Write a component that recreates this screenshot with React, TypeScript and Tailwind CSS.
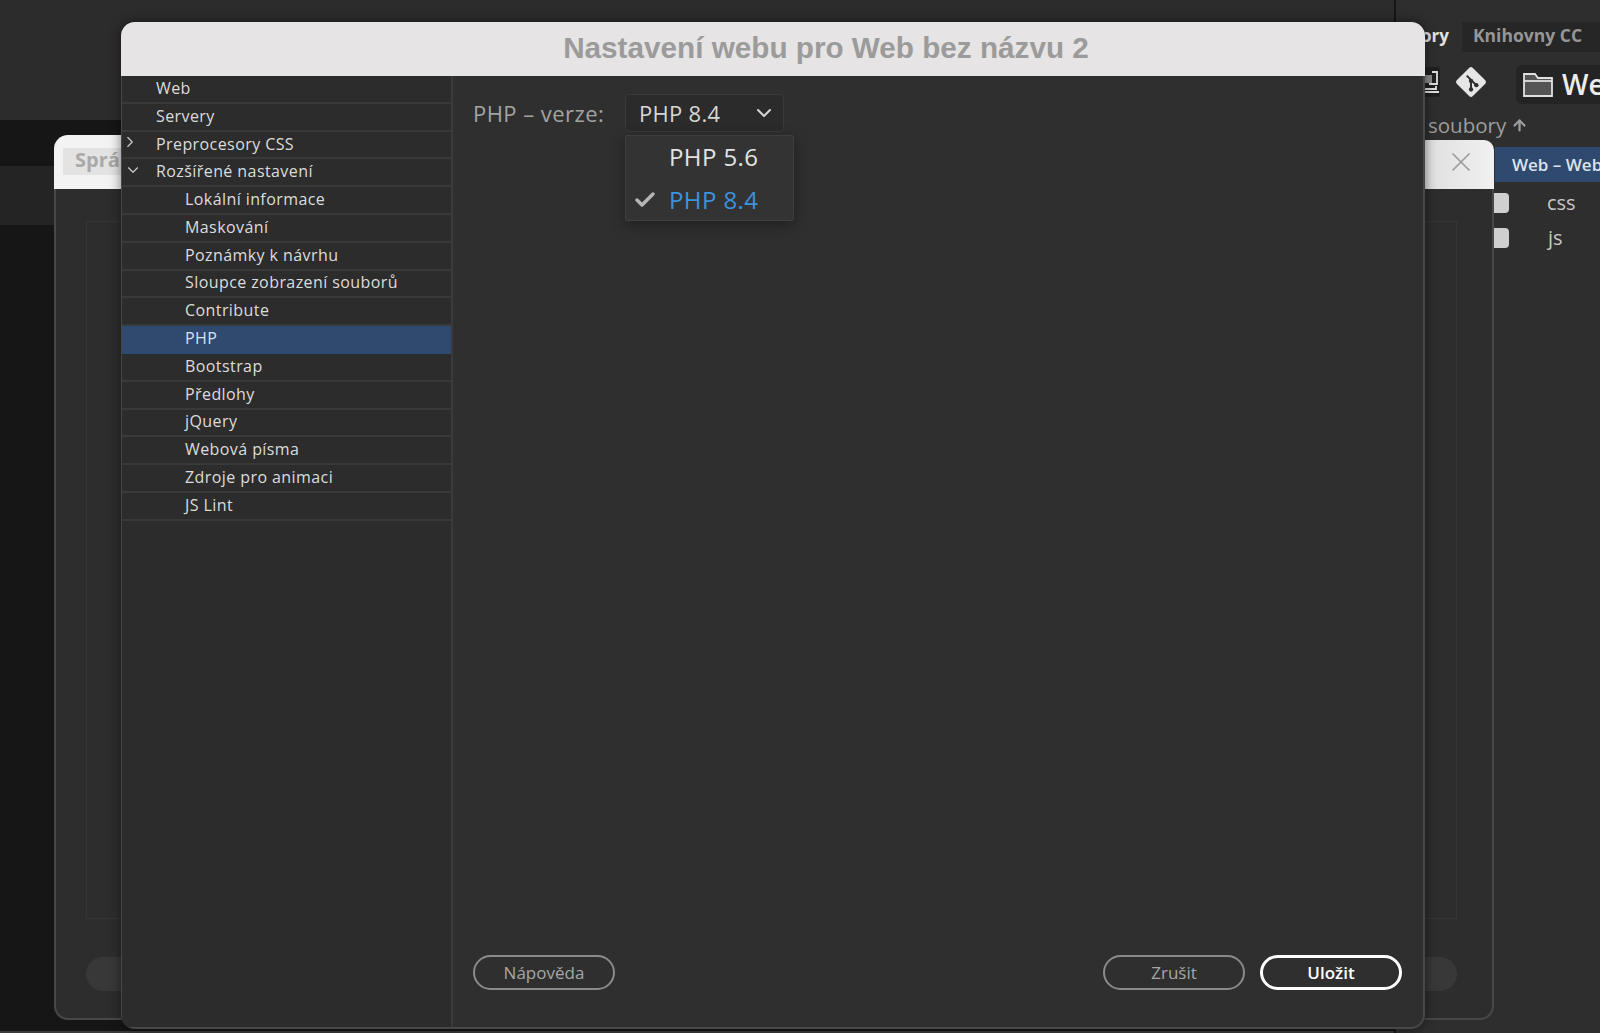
import { ArrowUp, Check, ChevronDown, ChevronRight, X } from "lucide-react";

const rows = [
  { label: "Web", indent: "pl-[34px]" },
  { label: "Servery", indent: "pl-[34px]" },
  { label: "Preprocesory CSS", indent: "pl-[34px]", arrow: "right" },
  { label: "Rozšířené nastavení", indent: "pl-[34px]", arrow: "down" },
  { label: "Lokální informace", indent: "pl-[63px]" },
  { label: "Maskování", indent: "pl-[63px]" },
  { label: "Poznámky k návrhu", indent: "pl-[63px]" },
  { label: "Sloupce zobrazení souborů", indent: "pl-[63px]" },
  { label: "Contribute", indent: "pl-[63px]" },
  { label: "PHP", indent: "pl-[63px]", active: true },
  { label: "Bootstrap", indent: "pl-[63px]" },
  { label: "Předlohy", indent: "pl-[63px]" },
  { label: "jQuery", indent: "pl-[63px]" },
  { label: "Webová písma", indent: "pl-[63px]" },
  { label: "Zdroje pro animaci", indent: "pl-[63px]" },
  { label: "JS Lint", indent: "pl-[63px]" },
];

function BackDialog() {
  return (
    <div className="absolute left-[54px] top-[135px] flex h-[885px] w-[1440px] flex-col">
      <div className="flex h-[54px] shrink-0 justify-between">
        <div className="w-[80px] rounded-tl-[14px] bg-[#f3f3f3] pl-[9px] pt-[13px]">
          <div className="h-[27px] w-[70px] bg-[#e3e3e3] pl-[12px] text-[20px] font-bold leading-[24px] text-[#a9a9a9]">
            Sprá
          </div>
        </div>
        <div className="mt-[5px] flex w-[80px] items-start justify-end rounded-tr-[10px] bg-gradient-to-r from-[#dcdcdc] to-[#f1f1f1] pr-[17px] pt-[6px]">
          <X className="h-[32px] w-[32px] text-[#9c9c9c]" strokeWidth={1.3} />
        </div>
      </div>
      <div className="flex-1 rounded-b-[14px] border-2 border-t-0 border-[#484848] bg-[#2d2d2d] pl-[30px] pr-[35px] pt-[32px]">
        <div className="h-[698px] border border-[#353535]" />
        <div className="mt-[38px] flex justify-between">
          <div className="h-[34px] w-[60px] rounded-full bg-[#383838]" />
          <div className="h-[34px] w-[60px] rounded-full bg-[#383838]" />
        </div>
      </div>
    </div>
  );
}

function RightPanel() {
  return (
    <div className="absolute left-[1394px] top-0 h-[1033px] w-[206px] border-l-2 border-[#161616] bg-[#2e2e2e] pl-[28px] pt-[22px] font-['Open_Sans',sans-serif]">
      <div className="flex h-[30px] items-center">
        <span className="-ml-[3px] -mt-[3px] w-[28px] text-[17px] font-bold whitespace-nowrap text-[#e2e2e2]">ory</span>
        <span className="ml-[13px] flex h-[30px] flex-1 items-center bg-[#262626] pb-[3px] pl-[11px] text-[17.5px] font-bold whitespace-nowrap text-[#969696]">
          Knihovny CC
        </span>
      </div>
      <div className="mt-[13px] flex h-[39px] items-center">
        <svg viewBox="0 0 16 30" className="-mt-[6px] h-[30px] w-[16px] shrink-0">
          <rect x="-8" y="0" width="24" height="30" rx="3" fill="#1f1f1f" />
          <rect x="0" y="8" width="8" height="8" fill="#8a8a8a" />
          <path d="M8 5h5v12H5M12 19v3H0M0 25h15" stroke="#dedede" strokeWidth="1.8" fill="none" />
        </svg>
        <svg viewBox="0 0 28 28" className="-mt-[6px] ml-[16px] h-[30px] w-[30px] shrink-0">
          <rect x="3.5" y="3.5" width="21" height="21" rx="2.5" transform="rotate(45 14 14)" fill="#e6e6e6" />
          <path d="M10 8l9 9M14 13v8" stroke="#2e2e2e" strokeWidth="1.8" fill="none" />
          <circle cx="14" cy="13" r="2" fill="#2e2e2e" />
          <circle cx="14" cy="21" r="2" fill="#2e2e2e" />
          <circle cx="19" cy="17" r="2" fill="#2e2e2e" />
        </svg>
        <div className="ml-[30px] flex h-[39px] flex-1 items-center rounded-l-[6px] bg-[#242424] pl-[7px]">
          <svg viewBox="0 0 30 26" className="h-[26px] w-[30px] shrink-0">
            <path d="M1 24V2h11l3 4h14v18z" fill="#555" stroke="#e0e0e0" strokeWidth="1.8" />
            <path d="M1 9h28" stroke="#e0e0e0" strokeWidth="1.8" />
          </svg>
          <span className="ml-[9px] pb-[2px] text-[28px] font-semibold text-[#ededed]">Web</span>
        </div>
      </div>
      <div className="mt-[6px] ml-[4px] flex h-[30px] items-center text-[20.5px] text-[#9d9d9d]">
        <span>soubory</span>
        <ArrowUp className="ml-[5px] h-[17px] w-[17px]" strokeWidth={3.2} />
      </div>
      <div className="mt-[7px] ml-[71px] flex h-[35px] items-center overflow-hidden bg-[#2f4a6e] pl-[17px] text-[17px] font-semibold whitespace-nowrap text-[#dce3ec]">
        Web – Web
      </div>
      <div className="ml-[68px] mt-[3px] flex flex-col">
        <div className="flex h-[35px] items-center">
          <div className="h-[20px] w-[17px] rounded-r-[4px] bg-[#cfcfcf]" />
          <span className="ml-[38px] text-[20px] text-[#c8c8c8]">css</span>
        </div>
        <div className="flex h-[35px] items-center">
          <div className="h-[20px] w-[17px] rounded-r-[4px] bg-[#cfcfcf]" />
          <span className="ml-[39px] text-[20px] text-[#c8c8c8]">js</span>
        </div>
      </div>
    </div>
  );
}

function Sidebar() {
  return (
    <div className="flex w-[331px] shrink-0 flex-col border-r-2 border-[#3a3a3a] bg-[#2c2c2c]">
      {rows.map((r) => (
        <div
          key={r.label}
          className={
            "relative flex h-[27.8px] shrink-0 items-center border-b-2 pb-[2px] text-[16px] tracking-[0.42px] whitespace-nowrap " +
            r.indent +
            (r.active
              ? " border-[#2f4a6e] bg-[#2f4a6e] text-[#d5e2f2]"
              : " border-[#393939] text-[#dcdcdc]")
          }
        >
          {r.arrow === "right" && (
            <ChevronRight className="absolute -left-[1px] top-[1px] h-[18px] w-[18px] text-[#d0d0d0]" strokeWidth={1.5} />
          )}
          {r.arrow === "down" && (
            <ChevronDown className="absolute left-[2px] top-[2px] h-[18px] w-[18px] text-[#d0d0d0]" strokeWidth={1.5} />
          )}
          {r.label}
        </div>
      ))}
    </div>
  );
}

function Pill({ label, primary }: { label: string; primary?: boolean }) {
  return (
    <div
      className={
        "flex h-[35px] w-[142px] items-center justify-center rounded-full text-[17px] " +
        (primary
          ? "border-[3px] border-white font-semibold text-white"
          : "border-2 border-[#8a8a8a] text-[#a6a6a6]")
      }
    >
      {label}
    </div>
  );
}

function MainDialog() {
  return (
    <div className="absolute left-[121px] top-[22px] flex h-[1007px] w-[1304px] flex-col overflow-hidden rounded-[14px] bg-[#2f2f2f] font-['Open_Sans',sans-serif] shadow-[0_0_12px_rgba(0,0,0,0.5)]">
      <div className="flex h-[54px] shrink-0 items-center justify-center bg-[#e6e4e4] pb-[2px] font-['Liberation_Sans',sans-serif] text-[29.7px] font-bold text-[#9b9b9b]">
        <span className="ml-[106px]">Nastavení webu pro Web bez názvu 2</span>
      </div>
      <div className="flex min-h-0 flex-1 rounded-b-[14px] border-2 border-l-[1px] border-t-0 border-[#484848]">
        <Sidebar />
        <div className="flex flex-1 flex-col pb-[37px] pl-[20px] pr-[21px] pt-[18px]">
          <div className="relative flex h-[38px] items-center">
            <span className="w-[152px] text-[22px] tracking-[0.45px] text-[#a3a3a3]">PHP – verze:</span>
            <div className="flex h-[38px] w-[159px] items-center justify-between rounded-[5px] border border-[#3a3a3a] bg-[#2b2b2b] pl-[13px] pr-[7px] text-[22px] tracking-[0.3px] text-[#d6d6d6]">
              PHP 8.4
              <ChevronDown className="h-[24px] w-[24px] text-[#d6d6d6]" strokeWidth={2} />
            </div>
            <div className="absolute left-[152px] top-[41px] flex h-[86px] w-[169px] flex-col justify-center rounded-[2px] border border-[#3f3f3f] bg-[#333333] pl-[7px] text-[24px] tracking-[0.4px] shadow-[0_4px_14px_rgba(0,0,0,0.35)]">
              <div className="flex h-[43px] items-center pl-[36px] text-[#e3e3e3]">PHP 5.6</div>
              <div className="flex h-[43px] items-center pt-[3px] text-[#3a93dd]">
                <Check className="h-[24px] w-[24px] text-[#b5b5b5]" strokeWidth={3.5} />
                <span className="ml-[12px]">PHP 8.4</span>
              </div>
            </div>
          </div>
          <div className="mt-auto flex items-center">
            <Pill label="Nápověda" />
            <div className="ml-auto flex gap-[15px]">
              <Pill label="Zrušit" />
              <Pill label="Uložit" primary />
            </div>
          </div>
        </div>
      </div>
    </div>
  );
}

export default function App() {
  return (
    <div className="relative h-[1033px] w-[1600px] overflow-hidden bg-[#161616] font-['Open_Sans',sans-serif]">
      <div className="h-[120px] bg-[#2c2c2c]" />
      <div className="h-[46px]" />
      <div className="h-[59px] bg-[#242424]" />
      <div className="absolute bottom-0 left-0 h-[2px] w-full bg-[#3b3b3b]" />
      <RightPanel />
      <BackDialog />
      <MainDialog />
    </div>
  );
}
